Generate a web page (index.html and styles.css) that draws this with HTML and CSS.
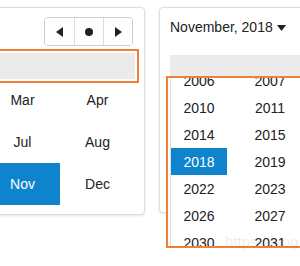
FILE: index.html
```html
<!DOCTYPE html>
<html lang="en">
<head>
<meta charset="utf-8">
<title>Picker</title>
<link rel="stylesheet" href="styles.css">
</head>
<body>
<div class="stage">
  <section class="card card-months">
    <div class="card-head">
      <div class="nav-group">
        <button class="nav-btn" type="button" aria-label="Previous">
          <svg width="7" height="10" viewBox="0 0 7 10"><path d="M7 0 L7 10 L0 5 Z" fill="#222"/></svg>
        </button>
        <button class="nav-btn" type="button" aria-label="Today">
          <svg width="8" height="8" viewBox="0 0 8 8"><circle cx="4" cy="4" r="4" fill="#222"/></svg>
        </button>
        <button class="nav-btn" type="button" aria-label="Next">
          <svg width="7" height="10" viewBox="0 0 7 10"><path d="M0 0 L0 10 L7 5 Z" fill="#222"/></svg>
        </button>
      </div>
    </div>
    <div class="bar bar-marked"></div>
    <div class="month-grid">
      <span class="month">Jan</span>
      <span class="month">Feb</span>
      <span class="month">Mar</span>
      <span class="month">Apr</span>
      <span class="month">May</span>
      <span class="month">Jun</span>
      <span class="month">Jul</span>
      <span class="month">Aug</span>
      <span class="month">Sep</span>
      <span class="month">Oct</span>
      <span class="month active">Nov</span>
      <span class="month">Dec</span>
    </div>
  </section>

  <section class="card card-years">
    <div class="title">
      <span>November, 2018</span>
      <svg class="caret" width="9" height="6" viewBox="0 0 9 6"><path d="M0 0 L9 0 L4.5 6 Z" fill="#222"/></svg>
    </div>
    <div class="bar"></div>
    <div class="year-menu">
      <div class="year-list">
        <span class="year">2006</span><span class="year">2007</span><span class="year">2008</span><span class="year">2009</span>
        <span class="year">2010</span><span class="year">2011</span><span class="year">2012</span><span class="year">2013</span>
        <span class="year">2014</span><span class="year">2015</span><span class="year">2016</span><span class="year">2017</span>
        <span class="year active">2018</span><span class="year">2019</span><span class="year">2020</span><span class="year">2021</span>
        <span class="year">2022</span><span class="year">2023</span><span class="year">2024</span><span class="year">2025</span>
        <span class="year">2026</span><span class="year">2027</span><span class="year">2028</span><span class="year">2029</span>
        <span class="year">2030</span><span class="year">2031</span><span class="year">2032</span><span class="year">2033</span>
      </div>
    </div>
  </section>
</div>
<div class="watermark">https://blog.csdn.net</div>
</body>
</html>
```

FILE: styles.css
```css
html, body {
  margin: 0;
  padding: 0;
  overflow: hidden;
  background: #fff;
}

body {
  width: 300px;
  height: 266px;
  position: relative;
  font-family: "Liberation Sans", Arial, sans-serif;
  color: #222;
}

.stage {
  display: flex;
  align-items: flex-start;
  gap: 14px;
  padding-top: 7px;
  margin-left: -175px;
}

.card {
  flex: none;
  box-sizing: border-box;
  background: #fff;
  border: 1px solid #dddddd;
  border-radius: 4px;
  box-shadow: 0 1px 3px rgba(0, 0, 0, 0.1);
}

.card-months {
  width: 320px;
  padding: 9px;
}

.card-head {
  display: flex;
  justify-content: flex-end;
}

.nav-group {
  display: flex;
  height: 29px;
  box-sizing: border-box;
  border: 1px solid #cccccc;
  border-radius: 4px;
  overflow: hidden;
  margin-right: 2px;
}

.nav-btn {
  width: 29px;
  padding: 0;
  margin: 0;
  border: 0;
  background: #fff;
  display: flex;
  align-items: center;
  justify-content: center;
}

.nav-btn + .nav-btn {
  border-left: 1px solid #dddddd;
}

.bar {
  height: 26px;
  background: #ebebeb;
}

.card-months .bar {
  margin-top: 7px;
}

.bar-marked {
  outline: 2px solid #ef8035;
  outline-offset: 2px;
}

.month-grid {
  display: grid;
  grid-template-columns: repeat(4, 75px);
  grid-auto-rows: 42px;
}

.month {
  display: flex;
  align-items: center;
  justify-content: center;
  font-size: 14px;
}

.month.active,
.year.active {
  background: #0d84cd;
  color: #fff;
}

.card-years {
  position: relative;
  width: 320px;
  height: 206px;
  padding: 9px 10px;
}

.title {
  display: flex;
  align-items: center;
  gap: 4px;
  font-size: 14px;
  line-height: 20px;
}

.caret {
  margin-top: 1px;
}

.card-years .bar {
  margin-top: 18px;
}

.year-menu {
  position: absolute;
  left: 6px;
  top: 68px;
  width: 160px;
  height: 172px;
  box-sizing: border-box;
  border: 2px solid #ef8035;
  padding-left: 2px;
  background: #fff;
  overflow: hidden;
}

.year-list {
  margin-top: -11px;
  border-left: 1px solid #dddddd;
  display: grid;
  grid-template-columns: repeat(4, 56px);
  column-gap: 15px;
  grid-auto-rows: 27px;
}

.year {
  display: flex;
  align-items: center;
  justify-content: center;
  font-size: 14px;
}

.watermark {
  position: absolute;
  left: 225px;
  top: 233px;
  font-size: 15px;
  white-space: nowrap;
  color: rgba(0, 0, 0, 0.09);
}
```
